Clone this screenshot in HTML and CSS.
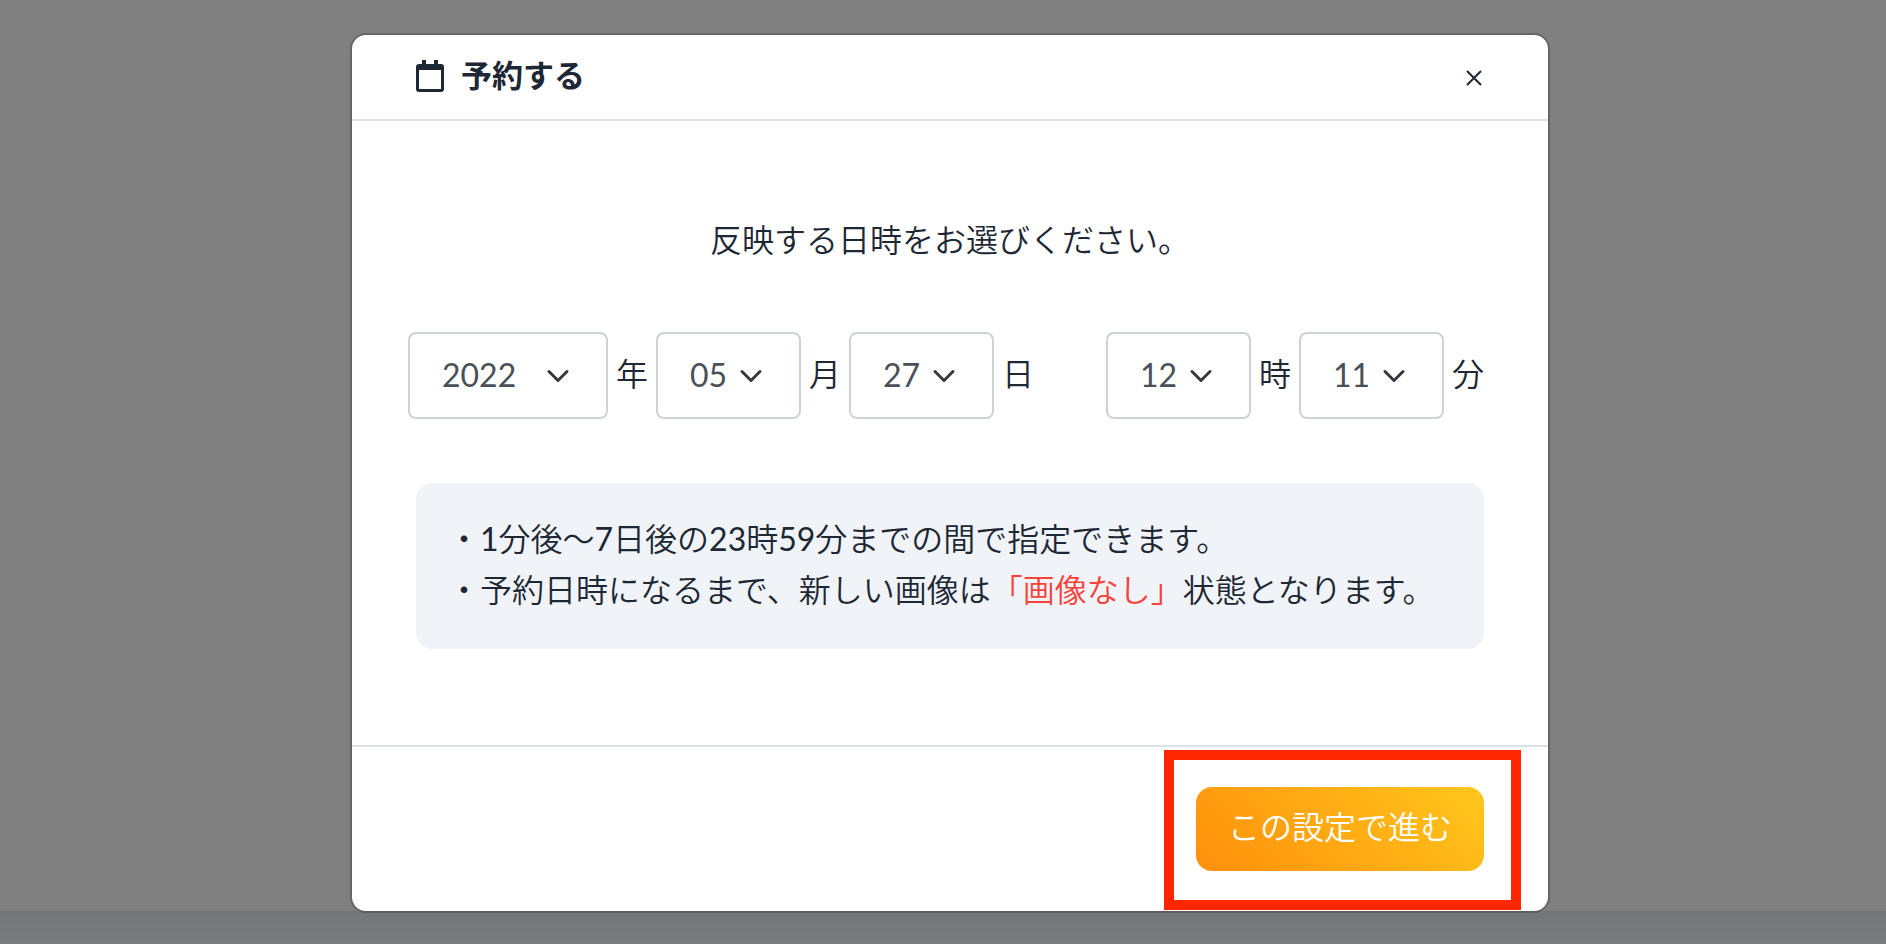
FILE: index.html
```html
<!DOCTYPE html>
<html lang="ja">
<head>
    <meta charset="UTF-8">
    <meta name="viewport" content="width=device-width, initial-scale=1.0">
    <title>予約する</title>
    <link rel="stylesheet" href="styles.css">
</head>
<body>

    <main class="overlay">
        <form class="modal" role="dialog" aria-labelledby="modalTitle">
            <header class="modal-header">
                <svg class="calendar-icon" viewBox="0 0 28 32" aria-hidden="true">
                    <path fill="currentColor" fill-rule="evenodd" d="M6 0h4v4h8V0h4v4h3a3 3 0 0 1 3 3v22a3 3 0 0 1-3 3H3a3 3 0 0 1-3-3V7a3 3 0 0 1 3-3h3zM3 10v19h22V10z"/>
                </svg>
                <h1 class="modal-title" id="modalTitle">予約する</h1>
                <button class="close" type="button" aria-label="閉じる">
                    <svg class="close-icon" viewBox="0 0 16 16" aria-hidden="true">
                        <path d="M1 1l14 14M15 1L1 15" fill="none" stroke="currentColor" stroke-width="2"/>
                    </svg>
                </button>
            </header>

            <div class="modal-body">
                <p class="lead">反映する日時をお選びください。</p>

                <div class="datetime">
                    <div class="group">
                        <select class="select select-year" id="year"><option>2022</option></select>
                        <label for="year">年</label>
                        <select class="select" id="month"><option>05</option></select>
                        <label for="month">月</label>
                        <select class="select" id="day"><option>27</option></select>
                        <label for="day">日</label>
                    </div>
                    <div class="group">
                        <select class="select" id="hour"><option>12</option></select>
                        <label for="hour">時</label>
                        <select class="select" id="minute"><option>11</option></select>
                        <label for="minute">分</label>
                    </div>
                </div>

                <div class="notes">
                    <p>・1分後〜7日後の23時59分までの間で指定できます。</p>
                    <p>・予約日時になるまで、新しい画像は<span class="danger">「画像なし」</span>状態となります。</p>
                </div>
            </div>

            <footer class="modal-footer">
                <button class="submit" type="submit">この設定で進む</button>
                <div class="highlight"></div>
            </footer>
        </form>
    </main>

</body>
</html>
```

FILE: styles.css
```css
* {
    box-sizing: border-box;
}

body {
    margin: 0;
    min-height: 100vh;
    background: linear-gradient(#747577, #7b7c7e) bottom / 100% 33px no-repeat #808080;
    color: #1e2734;
    font-family: Lato, "Noto Sans CJK JP DemiLight", "Noto Sans CJK JP", sans-serif;
    font-size: 32px;
    font-weight: 400;
    line-height: 51px;
}

h1, p {
    margin: 0;
}

.overlay {
    padding: 33px 0 31px 14px;
}

.modal {
    width: 64%;
    min-width: 1200px;
    margin: 0 auto;
    background-color: #fff;
    background-clip: padding-box;
    border: 2px solid rgba(0, 0, 0, 0.2);
    border-radius: 16px;
}

.modal-header {
    display: flex;
    align-items: center;
    padding: 15px 64px 17px;
    border-bottom: 2px solid #dae1ea;
}

.calendar-icon {
    width: 28px;
    height: 32px;
}

.modal-title {
    margin-left: 17px;
    padding-bottom: 2px;
    font-family: Lato, "Noto Sans CJK JP", sans-serif;
    font-size: 31px;
    font-weight: 700;
    line-height: 50px;
}

.close {
    display: flex;
    margin-left: auto;
    padding: 4px 2px 0;
    border: none;
    background: none;
    color: inherit;
    cursor: pointer;
}

.close-icon {
    width: 16px;
    height: 16px;
}

.modal-body {
    padding: 93px 64px 96px;
}

.lead {
    padding-bottom: 3px;
    text-align: center;
}

.datetime {
    display: flex;
    justify-content: space-between;
    margin: 64px 0 64px -8px;
}

.group {
    display: flex;
    align-items: center;
    gap: 8px;
}

.group label {
    padding-bottom: 4px;
}

.select {
    appearance: none;
    width: 145px;
    height: 87px;
    padding: 0 32px 2px;
    border: 2px solid #cbd2d9;
    border-radius: 8px;
    background: url("data:image/svg+xml,%3Csvg xmlns='http://www.w3.org/2000/svg' viewBox='0 0 16 16'%3E%3Cpath fill='none' stroke='%23343a40' stroke-linecap='round' stroke-linejoin='round' stroke-width='2' d='M2 5l6 6 6-6'/%3E%3C/svg%3E") right 36px center / 24px 24px no-repeat #fff;
    color: #495057;
    font: inherit;
}

.select-year {
    width: 200px;
}

.notes {
    padding: 30px 32px 34px;
    border-radius: 16px;
    background-color: #f0f4f9;
}

.danger {
    color: #f9423a;
}

.modal-footer {
    position: relative;
    display: flex;
    justify-content: flex-end;
    padding: 40px 64px;
    border-top: 2px solid #dae1ea;
}

.submit {
    height: 84px;
    padding: 0 32px 6px;
    border: none;
    border-radius: 16px;
    background: linear-gradient(45deg, #ff8f0b, #ffc71c);
    color: #fff;
    font: inherit;
    cursor: pointer;
}

/* red frame around the submit button */
.highlight {
    position: absolute;
    top: 3px;
    right: 27px;
    bottom: 1px;
    width: 357px;
    border: 10px solid #ff2600;
    pointer-events: none;
}
```
